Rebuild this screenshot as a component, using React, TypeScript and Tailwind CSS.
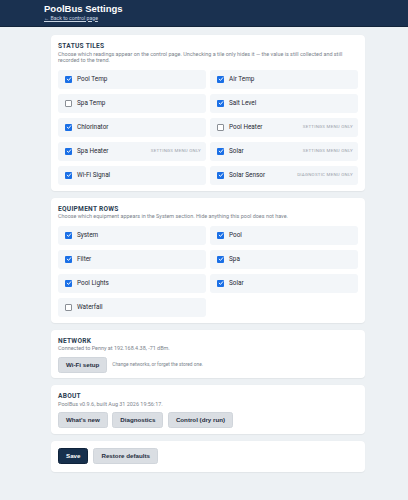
import React from "react";

type Tile = { label: string; on: boolean; note?: string };

const statusTiles: Tile[] = [
  { label: "Pool Temp", on: true },
  { label: "Air Temp", on: true },
  { label: "Spa Temp", on: false },
  { label: "Salt Level", on: true },
  { label: "Chlorinator", on: true },
  { label: "Pool Heater", on: false, note: "Settings menu only" },
  { label: "Spa Heater", on: true, note: "Settings menu only" },
  { label: "Solar", on: true, note: "Settings menu only" },
  { label: "Wi-Fi Signal", on: true },
  { label: "Solar Sensor", on: true, note: "Diagnostic menu only" },
];

const equipmentRows: Tile[] = [
  { label: "System", on: true },
  { label: "Pool", on: true },
  { label: "Filter", on: true },
  { label: "Spa", on: true },
  { label: "Pool Lights", on: true },
  { label: "Solar", on: true },
  { label: "Waterfall", on: false },
];

function Check({ on }: { on: boolean }) {
  if (!on) {
    return <span className="w-[7px] h-[7px] rounded-[1px] border border-[#8a8f96] bg-white shrink-0" />;
  }
  return (
    <span className="w-[7px] h-[7px] rounded-[1px] bg-[#1a6fe6] shrink-0 flex items-center justify-center">
      <svg viewBox="0 0 10 10" className="w-[6px] h-[6px]">
        <path d="M2 5.3 L4.2 7.3 L8 2.8" fill="none" stroke="white" strokeWidth="1.6" strokeLinecap="round" strokeLinejoin="round" />
      </svg>
    </span>
  );
}

function TileGrid({ items }: { items: Tile[] }) {
  return (
    <div className="grid grid-cols-2 gap-x-[4px] gap-y-[4.5px] mt-[6px]">
      {items.map((t, i) => (
        <div key={i} className="h-[19.5px] rounded-[3px] bg-[#f3f6f9] flex items-center pl-[7px] pr-[5px] gap-[5px]">
          <Check on={t.on} />
          <span className="text-[6.4px] leading-[8px] text-[#1f2933]">{t.label}</span>
          {t.note && (
            <span className="ml-auto text-[4.4px] uppercase tracking-[0.06em] text-[#9aa1a9]">{t.note}</span>
          )}
        </div>
      ))}
    </div>
  );
}

function Card({ title, desc, children }: { title?: string; desc?: React.ReactNode; children?: React.ReactNode }) {
  return (
    <section className="bg-white rounded-[4px] px-[7px] pt-[7px] pb-[5.5px] shadow-[0_0.5px_1px_rgba(0,0,0,0.05)]">
      {title && <h2 className="text-[6.6px] leading-[8px] font-bold uppercase tracking-[0.04em] text-[#2c3e52]">{title}</h2>}
      {desc && <p className="text-[5.45px] leading-[6.5px] text-[#7b838c] mt-[0.5px]">{desc}</p>}
      {children}
    </section>
  );
}

function Btn({ children, dark }: { children: React.ReactNode; dark?: boolean }) {
  return (
    <button
      className={
        "h-[16px] px-[7px] rounded-[2.5px] border font-['Liberation_Sans',Arial,sans-serif] text-[6.2px] font-bold " +
        (dark ? "bg-[#17304d] border-[#0f233b] text-white" : "bg-[#dadee3] border-[#d0d5db] text-[#1f2d3d]")
      }
    >
      {children}
    </button>
  );
}

export default function App() {
  return (
    <div className="min-h-[500px] bg-[#edf1f4] font-['Roboto',sans-serif]">
      <header className="bg-[#1a3150] h-[27px] pl-[44px] pt-[1.5px] border-b border-[#12243b]">
        <h1 className="text-white font-bold font-['Liberation_Sans',Arial,sans-serif] text-[9.5px] leading-[13px]">PoolBus Settings</h1>
        <a className="block text-[#c9d4e2] text-[5.2px] leading-[7px] underline">← Back to control page</a>
      </header>

      <main className="ml-[51px] w-[314px] pt-[8px] pb-[20px] flex flex-col gap-[7px]">
        <Card
          title="Status Tiles"
          desc="Choose which readings appear on the control page. Unchecking a tile only hides it — the value is still collected and still recorded to the trend."
        >
          <TileGrid items={statusTiles} />
        </Card>

        <Card title="Equipment Rows" desc="Choose which equipment appears in the System section. Hide anything this pool does not have.">
          <TileGrid items={equipmentRows} />
        </Card>

        <Card title="Network" desc="Connected to Penny at 192.168.4.38, -71 dBm.">
          <div className="flex items-center gap-[5px] mt-[5px]">
            <Btn>Wi-Fi setup</Btn>
            <span className="text-[4.8px] text-[#7b838c]">Change networks, or forget the stored one.</span>
          </div>
        </Card>

        <Card title="About" desc="PoolBus v0.9.6, built Aug 31 2026 19:56:17.">
          <div className="flex items-center gap-[4.5px] mt-[5px]">
            <Btn>What's new</Btn>
            <Btn>Diagnostics</Btn>
            <Btn>Control (dry run)</Btn>
          </div>
        </Card>

        <section className="bg-white rounded-[4px] px-[7px] py-[7.5px] shadow-[0_0.5px_1px_rgba(0,0,0,0.05)]">
          <div className="flex items-center gap-[5px]">
            <Btn dark>Save</Btn>
            <Btn>Restore defaults</Btn>
          </div>
        </section>
      </main>
    </div>
  );
}
